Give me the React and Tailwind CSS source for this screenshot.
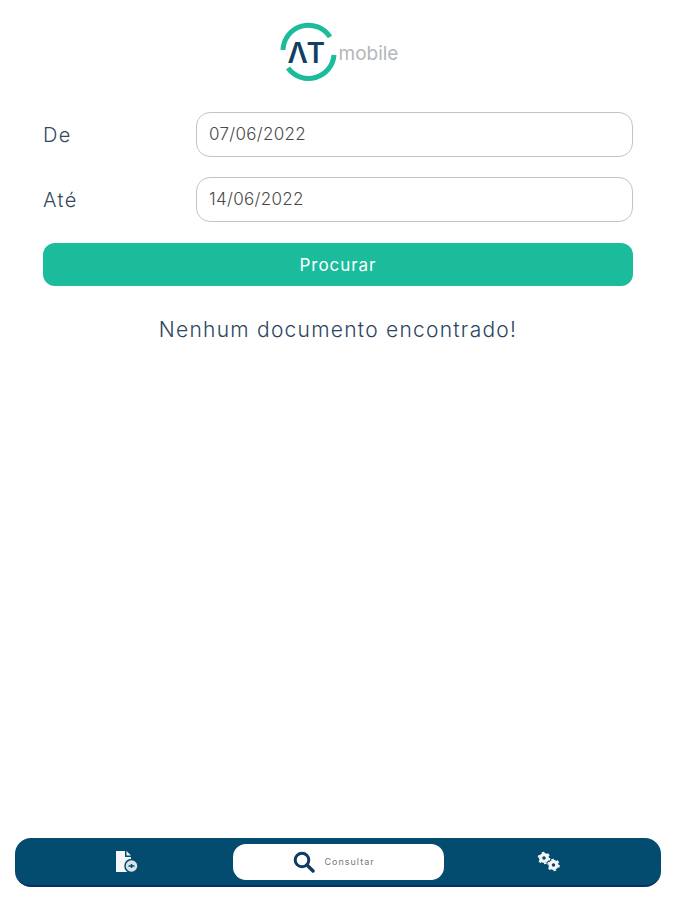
const font = { fontFamily: "Inter, 'Noto Sans', sans-serif" };

function Logo() {
  return (
    <div className="flex h-[112px] items-start justify-center pt-[23px]">
      <svg width="120" height="60" viewBox="0 0 120 60" className="overflow-visible">
        <path d="M5 27 A25.5 25.5 0 0 1 52 14" fill="none" stroke="#1abc9c" strokeWidth="5" />
        <path d="M10 45 A25.5 25.5 0 0 0 56 32" fill="none" stroke="#1abc9c" strokeWidth="5" />
        <text x="9.5" y="40" fontSize="28" fontWeight="600" fill="#123f63" fontFamily="Inter, sans-serif">Λ</text>
        <text x="28.5" y="40" fontSize="28" fontWeight="600" fill="#123f63" fontFamily="Inter, sans-serif">T</text>
        <text x="60.5" y="36.5" fontSize="19" fill="#b3b7ba" fontFamily="Inter, sans-serif">mobile</text>
      </svg>
    </div>
  );
}

function DateRow({ label, value }) {
  return (
    <div className="flex items-center">
      <label className="w-[153px] text-[20px] font-light tracking-[1.4px] text-[#34495e]">{label}</label>
      <div className="flex h-[45px] flex-1 items-center rounded-[14px] border-[1.5px] border-[#c4c4c4] bg-white pl-[12px] pr-3 text-[17px] font-light tracking-[0.3px] text-[#4a4a4a]">
        {value}
      </div>
    </div>
  );
}

function FileAddIcon() {
  return (
    <svg width="24" height="24" viewBox="0 0 24 24">
      <path d="M1 1 H10 V7 H16 V22 H1 Z" fill="#f4f6f8" />
      <path d="M11.5 1 L16 5.5 H11.5 Z" fill="#f4f6f8" />
      <circle cx="16.5" cy="16" r="6.5" fill="#d9e2e8" stroke="#034c6f" strokeWidth="1.5" />
      <path d="M13.5 16 H19.5 M16.5 14 V18" stroke="#034c6f" strokeWidth="1.5" />
    </svg>
  );
}

// duas engrenagens separadas, os dentes saem do tracejado
function GearsIcon() {
  return (
    <svg width="24" height="22" viewBox="0 0 24 22" fill="none">
      <circle cx="7" cy="7" r="3.4" stroke="#f4f6f8" strokeWidth="3.2" />
      <circle cx="7" cy="7" r="5.4" stroke="#f4f6f8" strokeWidth="1.8" strokeDasharray="2.6 3.05" />
      <circle cx="16.5" cy="14" r="3.4" stroke="#f4f6f8" strokeWidth="3.2" />
      <circle cx="16.5" cy="14" r="5.4" stroke="#f4f6f8" strokeWidth="1.8" strokeDasharray="2.6 3.05" />
    </svg>
  );
}

function SearchIcon() {
  return (
    <svg width="22" height="22" viewBox="0 0 22 22" fill="none" stroke="#123a63">
      <circle cx="9" cy="9" r="6.8" strokeWidth="3" />
      <path d="M14 14 L20 20" strokeWidth="3.4" strokeLinecap="round" />
    </svg>
  );
}

export default function App() {
  return (
    <div className="flex min-h-[900px] flex-col bg-white" style={font}>
      <Logo />
      <main className="flex flex-1 flex-col pl-[43px] pr-[42px]">
        <div className="flex flex-col gap-5">
          <DateRow label="De" value="07/06/2022" />
          <DateRow label="Até" value="14/06/2022" />
        </div>
        <button className="mt-[21px] h-[43px] rounded-[12px] bg-[#1abc9c] pt-[2px] text-[17px] font-normal tracking-[0.95px] text-white">
          Procurar
        </button>
        <p className="mt-[28px] text-center text-[21px] font-light tracking-[1.25px] text-[#2c4560]">
          Nenhum documento encontrado!
        </p>
      </main>
      <div className="pl-[15px] pr-[14px] pb-[13px]">
        <nav className="flex h-[49px] items-center rounded-[16px] border-b-2 border-[#062f63] bg-[#034c6f] px-[5px]">
          <div className="flex flex-1 items-center justify-center pl-[2px]">
            <FileAddIcon />
          </div>
          <div className="flex h-[36px] w-[211px] items-center gap-[10px] rounded-[13px] bg-white pl-[60px]">
            <SearchIcon />
            <span className="text-[9px] tracking-[1px] text-[#777777]">Consultar</span>
          </div>
          <div className="flex flex-1 items-center justify-center pr-[2px]">
            <GearsIcon />
          </div>
        </nav>
      </div>
    </div>
  );
}
